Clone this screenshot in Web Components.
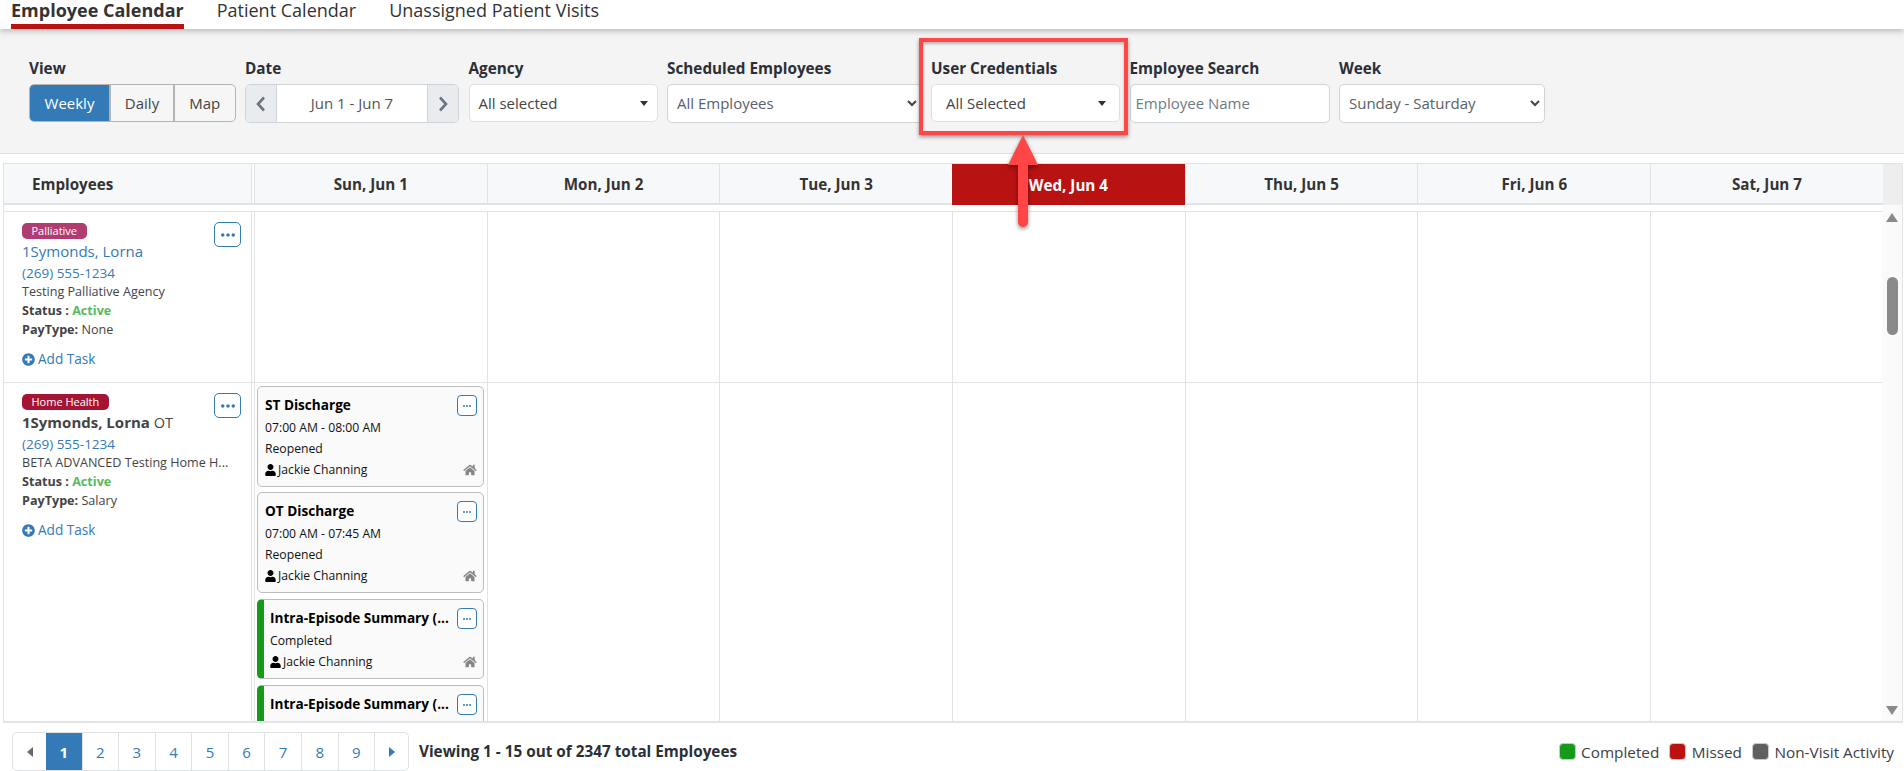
<!DOCTYPE html>
<html lang="en">
<head>
<meta charset="utf-8">
<title>Employee Calendar</title>
<style>
    html, body { margin: 0; height: 771px; overflow: hidden; background: #fff; }
    body { font-family: "Open Sans", "Liberation Sans", sans-serif; color: #333; display: flex; flex-direction: column; position: relative; }
</style>
</head>
<body>
<app-tabs>
    <a slot="tab" class="on">Employee Calendar</a>
    <a slot="tab">Patient Calendar</a>
    <a slot="tab">Unassigned Patient Visits</a>
</app-tabs>

<filter-bar>
    <filter-field label="View" width="206.5"><view-toggle></view-toggle></filter-field>
    <filter-field label="Date" width="214"><date-range>Jun 1 - Jun 7</date-range></filter-field>
    <filter-field label="Agency" width="189"><select-box arrow="caret" tone="dark">All selected</select-box></filter-field>
    <filter-field label="Scheduled Employees" width="254.5"><select-box arrow="chevron">All Employees</select-box></filter-field>
    <filter-field label="User Credentials" width="189"><select-box arrow="caret" tone="dark" pad="14" end="13">All Selected</select-box></filter-field>
    <filter-field label="Employee Search" width="200"><select-box tone="hint" pad="5">Employee Name</select-box></filter-field>
    <filter-field label="Week" width="206"><select-box arrow="chevron">Sunday - Saturday</select-box></filter-field>
</filter-bar>

<calendar-grid>
    <employee-row slot="row" height="170">
        <employee-cell slot="employee" badge="Palliative" color="#b03c72" name="1Symonds, Lorna" phone="(269) 555-1234" agency="Testing Palliative Agency" pay="None" link></employee-cell>
    </employee-row>
    <employee-row slot="row" height="339">
        <employee-cell slot="employee" badge="Home Health" color="#a61433" name="1Symonds, Lorna" cred="OT" phone="(269) 555-1234" agency="BETA ADVANCED Testing Home H..." pay="Salary"></employee-cell>
        <visit-card slot="sunday" title="ST Discharge" time="07:00 AM - 08:00 AM" state="Reopened"></visit-card>
        <visit-card slot="sunday" title="OT Discharge" time="07:00 AM - 07:45 AM" state="Reopened"></visit-card>
        <visit-card slot="sunday" title="Intra-Episode Summary (..." state="Completed" done></visit-card>
        <visit-card slot="sunday" title="Intra-Episode Summary (..." done cut></visit-card>
    </employee-row>
</calendar-grid>

<pager-bar></pager-bar>

<callout-mark></callout-mark>

<script>
const ICONS = {
    plus: `<svg viewBox="0 0 512 512" width="13" height="13"><path fill="#337ab7" d="M256 8C119 8 8 119 8 256s111 248 248 248 248-111 248-248S393 8 256 8zm144 276c0 6.6-5.4 12-12 12h-92v92c0 6.6-5.4 12-12 12h-56c-6.6 0-12-5.4-12-12v-92h-92c-6.6 0-12-5.4-12-12v-56c0-6.6 5.4-12 12-12h92v-92c0-6.6 5.4-12 12-12h56c6.6 0 12 5.4 12 12v92h92c6.6 0 12 5.4 12 12v56z"/></svg>`,
    user: `<svg viewBox="0 0 448 512" width="11" height="12"><path fill="#000" d="M224 256c70.7 0 128-57.3 128-128S294.7 0 224 0 96 57.3 96 128s57.3 128 128 128zm89.6 32h-16.7c-22.2 10.2-46.9 16-72.9 16s-50.6-5.8-72.9-16h-16.7C60.2 288 0 348.2 0 422.4V464c0 26.5 21.5 48 48 48h352c26.5 0 48-21.5 48-48v-41.6c0-74.2-60.2-134.4-134.4-134.4z"/></svg>`,
    home: `<svg viewBox="0 0 576 512" width="14" height="12"><path fill="#858585" d="M280.37 148.26L96 300.11V464a16 16 0 0 0 16 16l112.06-.29a16 16 0 0 0 15.92-16V368a16 16 0 0 1 16-16h64a16 16 0 0 1 16 16v95.64a16 16 0 0 0 16 16.05L464 480a16 16 0 0 0 16-16V300L295.67 148.26a12.19 12.19 0 0 0-15.3 0zM571.6 251.47L488 182.56V44.05a12 12 0 0 0-12-12h-56a12 12 0 0 0-12 12v72.61L318.47 43a48 48 0 0 0-61 0L4.34 251.47a12 12 0 0 0-1.6 16.9l25.5 31A12 12 0 0 0 45.15 301l235.22-193.74a12.19 12.19 0 0 1 15.3 0L530.9 301a12 12 0 0 0 16.9-1.6l25.5-31a12 12 0 0 0-1.7-16.93z"/></svg>`,
    dots: `<svg viewBox="0 0 16 4" width="100%" height="100%" style="display:block"><circle cx="2" cy="2" r="2" fill="#337ab7"/><circle cx="8" cy="2" r="2" fill="#337ab7"/><circle cx="14" cy="2" r="2" fill="#337ab7"/></svg>`
};

class AppTabs extends HTMLElement {
    constructor() {
        super();
        this.attachShadow({ mode: "open" });
        this.shadowRoot.innerHTML = `
            <style>
                :host { display: flex; height: 29px; padding-left: 11px; gap: 33px; background: #fff; position: relative; z-index: 2; box-shadow: 0 2px 6px rgba(0,0,0,.25); flex: none; }
                ::slotted(a) { font-size: 18px; line-height: 20px; color: #333; box-sizing: border-box; height: 29px; white-space: nowrap; }
                ::slotted(a.on) { font-weight: 700; border-bottom: 5px solid #b91212; }
            </style>
            <slot name="tab"></slot>
        `;
    }
}

class FilterBar extends HTMLElement {
    constructor() {
        super();
        this.attachShadow({ mode: "open" });
        this.shadowRoot.innerHTML = `
            <style>
                :host { display: flex; gap: 9.5px; height: 125px; box-sizing: border-box; padding: 30px 0 0 29px; background: #f4f4f4; border-bottom: 1px solid #dfe1e5; flex: none; }
            </style>
            <slot></slot>
        `;
    }
}

class FilterField extends HTMLElement {
    constructor() {
        super();
        this.attachShadow({ mode: "open" });
        this.shadowRoot.innerHTML = `
            <style>
                :host { display: block; flex: none; }
                .lab { font-size: 15.3px; font-weight: 700; line-height: 18px; height: 25px; color: #2b2f36; white-space: nowrap; }
            </style>
            <div class="lab"></div>
            <slot></slot>
        `;
    }

    connectedCallback() {
        this.shadowRoot.querySelector(".lab").textContent = this.getAttribute("label");
        this.style.width = this.getAttribute("width") + "px";
    }
}

class ViewToggle extends HTMLElement {
    constructor() {
        super();
        this.attachShadow({ mode: "open" });
        this.shadowRoot.innerHTML = `
            <style>
                :host { display: flex; height: 38px; box-sizing: border-box; border: 1px solid #b4b4b4; border-radius: 5px; overflow: hidden; font-size: 15px; background: #f6f6f6; color: #444; }
                div { display: flex; align-items: center; justify-content: center; border-left: 2px solid #b4b4b4; }
                .a { width: 79px; border: 0; background: #337ab7; color: #fff; }
                .b { width: 62px; }
                .c { flex: 1; }
            </style>
            <div class="a">Weekly</div><div class="b">Daily</div><div class="c">Map</div>
        `;
    }
}

class DateRange extends HTMLElement {
    constructor() {
        super();
        this.attachShadow({ mode: "open" });
        this.shadowRoot.innerHTML = `
            <style>
                :host { display: flex; height: 39px; box-sizing: border-box; border: 1px solid #ced4da; border-radius: 5px; overflow: hidden; font-size: 15px; color: #555; background: #fff; }
                .arrow { width: 30px; background: #e9ecef; display: flex; align-items: center; justify-content: center; }
                .mid { flex: 1; display: flex; align-items: center; justify-content: center; padding-bottom: 1px; border-left: 1px solid #ced4da; border-right: 1px solid #ced4da; }
            </style>
            <div class="arrow"><svg width="10" height="16" viewBox="0 0 10 16"><path d="M8 1.5 2 8l6 6.5" fill="none" stroke="#6b7580" stroke-width="2.6"/></svg></div>
            <div class="mid"><slot></slot></div>
            <div class="arrow"><svg width="10" height="16" viewBox="0 0 10 16"><path d="M2 1.5 8 8l-6 6.5" fill="none" stroke="#6b7580" stroke-width="2.6"/></svg></div>
        `;
    }
}

class SelectBox extends HTMLElement {
    constructor() {
        super();
        this.attachShadow({ mode: "open" });
        this.shadowRoot.innerHTML = `
            <style>
                :host { display: flex; align-items: center; justify-content: space-between; height: 39px; padding-bottom: 1px; box-sizing: border-box; border: 1px solid #ced4da; border-radius: 5px; background: #fff; font-size: 15px; color: #5a6068; white-space: nowrap; }
                :host([tone="dark"]) { color: #444; height: 38px; padding-bottom: 0; border-color: #dcdfe3; }
                :host([tone="hint"]) { color: #6f7a85; }
                svg { margin-right: 4px; flex: none; }
            </style>
            <span id="txt"><slot></slot></span>
            <span id="ico"></span>
        `;
    }

    connectedCallback() {
        const pad = this.getAttribute("pad") || "9";
        this.shadowRoot.querySelector("#txt").style.paddingLeft = pad + "px";
        const arrow = this.getAttribute("arrow");
        const ico = this.shadowRoot.querySelector("#ico");
        ico.style.display = "flex";
        if (arrow === "caret") {
            const end = this.getAttribute("end") || "9";
            ico.innerHTML = `<svg style="margin-right:${end}px" width="8" height="5" viewBox="0 0 8 5"><path d="M0 0h8L4 5z" fill="#333"/></svg>`;
        } else if (arrow === "chevron") {
            ico.innerHTML = `<svg width="10" height="7" viewBox="0 0 10 7"><path d="M1 1l4 4 4-4" fill="none" stroke="#444" stroke-width="2"/></svg>`;
        }
    }
}

class CalendarGrid extends HTMLElement {
    constructor() {
        super();
        this.attachShadow({ mode: "open" });
        const days = ["Sun, Jun 1", "Mon, Jun 2", "Tue, Jun 3", "Wed, Jun 4", "Thu, Jun 5", "Fri, Jun 6", "Sat, Jun 7"];
        this.shadowRoot.innerHTML = `
            <style>
                :host { display: flex; flex-direction: column; margin: 9px 1px 0 3px; height: 560px; box-sizing: border-box; border: 1px solid #e1e3e8; border-bottom-width: 2px; flex: none; }
                .head { display: grid; grid-template-columns: 247px 3px repeat(7, 232.7px) 1fr; height: 41px; background: #f7f8fa; font-size: 15.2px; font-weight: 700; color: #333; flex: none; }
                .head div { display: flex; align-items: center; justify-content: center; border-left: 1px solid #e1e3e8; border-bottom: 2px solid #e1e3e8; box-sizing: border-box; }
                .head .emp { justify-content: flex-start; padding-left: 28px; border-left: 0; }
                .head .sep { background: #fff; border-bottom-color: #e1e3e8; }
                .head .today { background: #b91212; color: #fff; border: 0; }
                .head .bar { background: #eee; border-bottom: 0; border-left: 0; }
                .body { display: flex; flex: 1; min-height: 0; }
                .rows { flex: 1; min-width: 0; overflow: hidden; }
                .track { width: 20px; background: #fafafa; display: flex; flex-direction: column; align-items: center; padding-top: 8px; box-sizing: border-box; flex: none; }
                .thumb { width: 11px; height: 58px; border-radius: 6px; background: #8a8a8a; margin-top: 55px; }
                .track svg:last-child { margin-top: auto; margin-bottom: 6px; }
            </style>
            <div class="head">
                <div class="emp">Employees</div><div class="sep"></div>
                ${days.map((d, i) => `<div class="${i === 3 ? "today" : ""}">${d}</div>`).join("")}
                <div class="bar"></div>
            </div>
            <div class="body">
                <div class="rows"><slot name="row"></slot></div>
                <div class="track">
                    <svg width="12" height="9" viewBox="0 0 12 9"><path d="M6 0l6 9H0z" fill="#8a8a8a"/></svg>
                    <div class="thumb"></div>
                    <svg width="12" height="9" viewBox="0 0 12 9"><path d="M0 0h12L6 9z" fill="#8a8a8a"/></svg>
                </div>
            </div>
        `;
    }
}

class EmployeeRow extends HTMLElement {
    constructor() {
        super();
        this.attachShadow({ mode: "open" });
        let blanks = "";
        for (let i = 0; i < 6; i++) {
            blanks += `<div class="day"></div>`;
        }
        this.shadowRoot.innerHTML = `
            <style>
                :host { display: block; border-top: 1px solid #e1e3e8; margin-top: 6px; }
                :host(:not(:first-child)) { margin-top: 0; }
                .wrap { display: grid; grid-template-columns: 247px 3px repeat(7, 232.7px); height: 100%; }
                .sep { border-left: 1px solid #e1e3e8; border-right: 1px solid #e1e3e8; margin-right: -1px; }
                .day { border-left: 1px solid #e1e3e8; box-sizing: border-box; min-width: 0; }
                .day.first { padding: 3px 2.7px 0 2px; }
            </style>
            <div class="wrap">
                <div><slot name="employee"></slot></div>
                <div class="sep"></div>
                <div class="day first"><slot name="sunday"></slot></div>
                ${blanks}
            </div>
        `;
    }

    connectedCallback() {
        this.style.height = this.getAttribute("height") + "px";
    }
}

class EmployeeCell extends HTMLElement {
    constructor() {
        super();
        this.attachShadow({ mode: "open" });
        this.shadowRoot.innerHTML = `
            <style>
                :host { display: block; position: relative; padding: 11px 10px 0 18px; font-size: 12.6px; color: #444; }
                .badge { display: inline-block; height: 16px; line-height: 15px; padding: 0 9.5px; border-radius: 5px; color: #fff; font-size: 11px; vertical-align: top; }
                .name { font-size: 15px; line-height: 21px; margin-top: 1px; font-weight: 700; white-space: nowrap; }
                .name.link { color: #337ab7; font-weight: 400; }
                .name small { font-weight: 400; font-size: 14.5px; }
                .phone { font-size: 13.5px; line-height: 19px; margin: 2px 0 -1px; color: #337ab7; }
                .line { line-height: 19px; white-space: nowrap; }
                b { font-weight: 700; }
                .ok { color: #5cb85c; font-weight: 700; }
                .add { display: flex; align-items: center; gap: 3px; margin-top: 10px; font-size: 13.6px; line-height: 20px; color: #337ab7; }
                .menu { position: absolute; top: 10px; right: 10px; width: 27px; height: 25px; box-sizing: border-box; border: 1px solid #337ab7; border-radius: 5px; background: #fff; display: flex; align-items: center; justify-content: center; }
                .menu span { width: 14px; height: 4px; display: block; }
            </style>
            <div class="badge"></div>
            <div class="name"></div>
            <div class="phone"></div>
            <div class="line agency"></div>
            <div class="line"><b>Status : </b><span class="ok">Active</span></div>
            <div class="line"><b>PayType:</b> <span class="pay"></span></div>
            <div class="add">${ICONS.plus}<span>Add Task</span></div>
            <div class="menu"><span>${ICONS.dots}</span></div>
        `;
    }

    connectedCallback() {
        const root = this.shadowRoot;
        const badge = root.querySelector(".badge");
        badge.textContent = this.getAttribute("badge");
        badge.style.background = this.getAttribute("color");
        const name = root.querySelector(".name");
        name.textContent = this.getAttribute("name");
        if (this.hasAttribute("link")) {
            name.classList.add("link");
        }
        if (this.hasAttribute("cred")) {
            const cred = document.createElement("small");
            cred.textContent = " " + this.getAttribute("cred");
            name.appendChild(cred);
        }
        root.querySelector(".phone").textContent = this.getAttribute("phone");
        root.querySelector(".agency").textContent = this.getAttribute("agency");
        root.querySelector(".pay").textContent = this.getAttribute("pay");
    }
}

class VisitCard extends HTMLElement {
    constructor() {
        super();
        this.attachShadow({ mode: "open" });
        this.shadowRoot.innerHTML = `
            <style>
                :host { display: block; position: relative; box-sizing: border-box; margin-bottom: 5px; border: 1px solid #bdbdbd; border-radius: 5px; background: #fafafa; padding: 7px 6px 6px 7px; font-size: 12.2px; line-height: 21px; color: #111; overflow: hidden; }
                :host([done]) { border-left: 7px solid #169a1a; padding-left: 6px; margin-top: 6px; }
                :host([cut]) { height: 60px; }
                .title { font-size: 13.6px; font-weight: 700; color: #000; line-height: 22px; white-space: nowrap; margin-bottom: 1px; }
                .who { display: flex; align-items: center; gap: 2px; }
                .home { margin-left: auto; display: flex; }
                .menu { position: absolute; top: 8px; right: 6px; width: 20px; height: 21px; box-sizing: border-box; border: 1px solid #337ab7; border-radius: 4px; background: #fff; display: flex; align-items: center; justify-content: center; }
                .menu span { width: 8px; height: 2px; display: block; }
            </style>
            <div class="title"></div>
            <div class="time"></div>
            <div class="state"></div>
            <div class="who">${ICONS.user}<span>Jackie Channing</span><span class="home">${ICONS.home}</span></div>
            <div class="menu"><span>${ICONS.dots}</span></div>
        `;
    }

    connectedCallback() {
        const root = this.shadowRoot;
        root.querySelector(".title").textContent = this.getAttribute("title");
        const time = root.querySelector(".time");
        if (this.hasAttribute("time")) {
            time.textContent = this.getAttribute("time");
        } else {
            time.remove();
        }
        // last card runs under the bottom of the scroll area, only its title shows
        if (this.hasAttribute("cut")) {
            root.querySelector(".state").remove();
            root.querySelector(".who").remove();
        } else {
            root.querySelector(".state").textContent = this.getAttribute("state");
        }
    }
}

class PagerBar extends HTMLElement {
    constructor() {
        super();
        this.attachShadow({ mode: "open" });
        const pages = [1, 2, 3, 4, 5, 6, 7, 8, 9];
        this.shadowRoot.innerHTML = `
            <style>
                :host { display: flex; align-items: flex-start; padding: 9px 10px 0 12px; height: 39px; flex: none; font-size: 15.3px; color: #333; }
                .pages { display: flex; height: 39px; box-sizing: border-box; border: 1px solid #dee2e6; border-radius: 5px; width: 397px; flex: none; }
                .pages div { flex: 1; display: flex; align-items: center; justify-content: center; border-left: 1px solid #dee2e6; color: #337ab7; font-size: 15px; }
                .pages .end { flex: none; width: 33px; border-left: 0; }
                .pages .end.last { border-left: 1px solid #dee2e6; }
                .pages .cur { background: #337ab7; color: #fff; font-weight: 700; border-left: 0; }
                .count { margin-left: 10px; font-weight: 700; line-height: 39px; color: #2b2f36; white-space: nowrap; }
                .legend { margin-left: auto; display: flex; align-items: center; height: 39px; white-space: nowrap; color: #3b4048; }
                .legend i { width: 17px; height: 17px; border-radius: 4px; border: 1px solid #c9c9c9; box-sizing: border-box; margin: 0 5.5px 0 10px; }
            </style>
            <div class="pages">
                <div class="end"><svg width="6" height="10" viewBox="0 0 6 10"><path d="M6 0v10L0 5z" fill="#6a6a6a"/></svg></div>
                ${pages.map((p) => `<div class="${p === 1 ? "cur" : ""}">${p}</div>`).join("")}
                <div class="end last"><svg width="6" height="10" viewBox="0 0 6 10"><path d="M0 0v10l6-5z" fill="#337ab7"/></svg></div>
            </div>
            <div class="count">Viewing 1 - 15 out of 2347 total Employees</div>
            <div class="legend">
                <i style="background:#169a1a"></i><span>Completed</span>
                <i style="background:#bd1010"></i><span>Missed</span>
                <i style="background:#5f5f5f"></i><span>Non-Visit Activity</span>
            </div>
        `;
    }
}

// red annotation drawn over the screenshot
class CalloutMark extends HTMLElement {
    constructor() {
        super();
        this.attachShadow({ mode: "open" });
        this.shadowRoot.innerHTML = `
            <style>
                :host { display: block; position: absolute; left: 0; top: 0; width: 0; height: 0; z-index: 5; }
                .box { position: absolute; left: 919px; top: 38px; width: 209px; height: 97px; box-sizing: border-box; border: 4px solid #ff4545; box-shadow: 0 2px 4px rgba(0,0,0,.4), inset 0 2px 3px rgba(0,0,0,.25); }
                svg { position: absolute; left: 1000px; top: 130px; filter: drop-shadow(0 2px 2px rgba(0,0,0,.45)); }
            </style>
            <div class="box"></div>
            <svg width="46" height="104" viewBox="0 0 46 104"><path d="M23 5 38 35H28V92a5 5 0 0 1-10 0V35H8z" fill="#ff4545"/></svg>
        `;
    }
}

customElements.define("app-tabs", AppTabs);
customElements.define("filter-bar", FilterBar);
customElements.define("filter-field", FilterField);
customElements.define("view-toggle", ViewToggle);
customElements.define("date-range", DateRange);
customElements.define("select-box", SelectBox);
customElements.define("calendar-grid", CalendarGrid);
customElements.define("employee-row", EmployeeRow);
customElements.define("employee-cell", EmployeeCell);
customElements.define("visit-card", VisitCard);
customElements.define("pager-bar", PagerBar);
customElements.define("callout-mark", CalloutMark);
</script>
</body>
</html>
